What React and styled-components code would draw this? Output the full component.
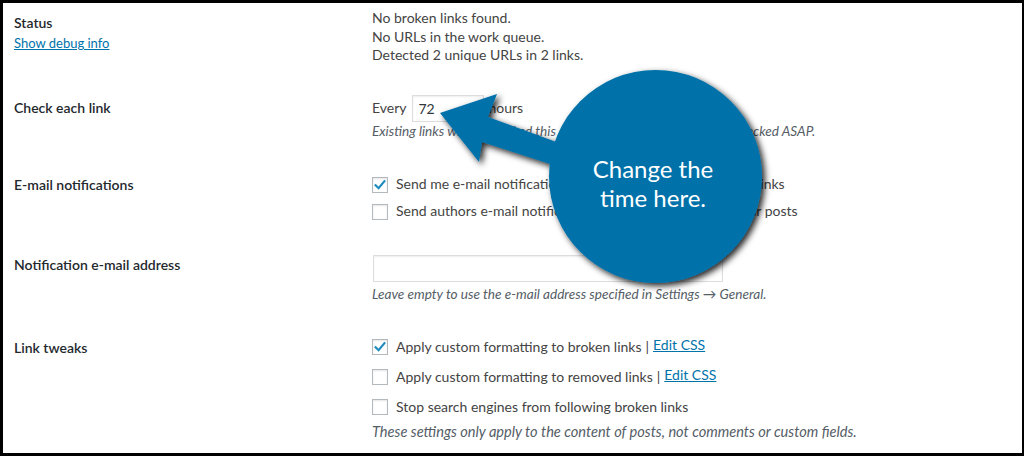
import React from "react";
import styled, { createGlobalStyle } from "styled-components";

const GlobalStyle = createGlobalStyle`
  html, body {
    margin: 0;
    padding: 0;
    background: #fff;
  }
  body {
    font-family: Lato, "Liberation Sans", sans-serif;
  }
`;

const Stage = styled.div`
  position: relative;
  width: 1024px;
  height: 456px;
  overflow: hidden;
`;

const Frame = styled.div`
  box-sizing: border-box;
  width: 100%;
  height: 100%;
  border-style: solid;
  border-color: #000;
  border-width: 3px 2px 3px 3px;
  background: #fff;
  display: flex;
  flex-direction: column;
`;

const Row = styled.div`
  display: grid;
  grid-template-columns: 358px 1fr;
  padding-left: 11px;
  height: ${(p) => (p.$h ? `${p.$h}px` : "auto")};
  flex: ${(p) => (p.$h ? "none" : "1")};
`;

const Label = styled.div`
  padding-top: ${(p) => p.$pt}px;
  font-size: 14px;
  font-weight: 600;
  line-height: 20px;
  color: #23282d;
`;

const DebugLink = styled.a`
  display: block;
  font-size: 13px;
  font-weight: 400;
  line-height: 20px;
  color: #0073aa;
  text-decoration: underline;
`;

const Value = styled.div`
  padding-top: ${(p) => p.$pt}px;
  font-size: 14px;
  line-height: 18.5px;
  color: #444;
`;

const Line = styled.div``;

const Inline = styled.div`
  display: flex;
  align-items: center;
  height: 27px;
`;

const NumberInput = styled.input`
  box-sizing: border-box;
  width: 72px;
  height: 27px;
  margin: 0 5px;
  padding: 0 6px;
  border: 1px solid #ddd;
  box-shadow: inset 0 1px 2px rgba(0, 0, 0, 0.07);
  font-family: inherit;
  font-size: 14px;
  color: #32373c;
  outline: none;
`;

const TextInput = styled.input`
  display: block;
  box-sizing: border-box;
  width: 350px;
  height: 27px;
  margin: 0 0 0 1px;
  border: 1px solid #ddd;
  box-shadow: inset 0 1px 2px rgba(0, 0, 0, 0.07);
  outline: none;
`;

const Desc = styled.p`
  margin: ${(p) => p.$mt || 0}px 0 0;
  font-size: ${(p) => p.$fs || 13.6}px;
  font-style: italic;
  line-height: 18px;
  color: #555d66;
`;

const CheckRow = styled.label`
  display: flex;
  align-items: center;
  gap: 8px;
  height: ${(p) => p.$h}px;
`;

const Box = styled.span`
  box-sizing: border-box;
  display: inline-flex;
  align-items: center;
  justify-content: center;
  width: 16px;
  height: 16px;
  border: 1px solid #b4b9be;
  background: #fff;
  box-shadow: inset 0 1px 2px rgba(0, 0, 0, 0.1);
`;

const Sep = styled.span`
  margin: 0 4px;
`;

const EditLink = styled.a`
  color: #0073aa;
  text-decoration: underline;
  position: relative;
  top: -2px;
`;

const Overlay = styled.div`
  position: absolute;
  inset: 0;
  pointer-events: none;
`;

const CalloutText = styled.div`
  position: absolute;
  left: 553px;
  top: 154px;
  width: 200px;
  text-align: center;
  font-family: Lato, "Open Sans", sans-serif;
  font-size: 24px;
  line-height: 29px;
  color: #fff;
`;

const Checkbox = ({ checked }) => (
  <Box>
    {checked && (
      <svg width="14" height="14" viewBox="0 0 14 14">
        <path
          d="M2.6 7.2 L5.6 10.2 L11.4 3.2"
          fill="none"
          stroke="#1e8cbe"
          strokeWidth="2.2"
          strokeLinecap="square"
        />
      </svg>
    )}
  </Box>
);

const Option = ({ h, checked, children }) => (
  <CheckRow $h={h}>
    <Checkbox checked={checked} />
    <span>{children}</span>
  </CheckRow>
);

export default function App() {
  return (
    <Stage>
      <GlobalStyle />
      <Frame>
        <Row $h={77}>
          <Label $pt={10}>
            Status
            <DebugLink href="#">Show debug info</DebugLink>
          </Label>
          <Value $pt={6}>
            <Line>No broken links found.</Line>
            <Line>No URLs in the work queue.</Line>
            <Line>Detected 2 unique URLs in 2 links.</Line>
          </Value>
        </Row>

        <Row $h={75}>
          <Label $pt={18}>Check each link</Label>
          <Value $pt={15}>
            <Inline>
              Every
              <NumberInput defaultValue="72" />
              hours
            </Inline>
            <Desc>
              Existing links will be checked this often. New links will usually be checked ASAP.
            </Desc>
          </Value>
        </Row>

        <Row $h={80}>
          <Label $pt={20}>E-mail notifications</Label>
          <Value $pt={16}>
            <Option h={27} checked>
              Send me e-mail notifications about newly detected broken links
            </Option>
            <Option h={27}>
              Send authors e-mail notifications about broken links in their posts
            </Option>
          </Value>
        </Row>

        <Row $h={85}>
          <Label $pt={20}>Notification e-mail address</Label>
          <Value $pt={20}>
            <TextInput />
            <Desc $mt={3}>
              Leave empty to use the e-mail address specified in Settings → General.
            </Desc>
          </Value>
        </Row>

        <Row>
          <Label $pt={18}>Link tweaks</Label>
          <Value $pt={12}>
            <Option h={30} checked>
              Apply custom formatting to broken links<Sep>|</Sep>
              <EditLink href="#">Edit CSS</EditLink>
            </Option>
            <Option h={30}>
              Apply custom formatting to removed links<Sep>|</Sep>
              <EditLink href="#">Edit CSS</EditLink>
            </Option>
            <Option h={30}>Stop search engines from following broken links</Option>
            <Desc $mt={1} $fs={14.6}>
              These settings only apply to the content of posts, not comments or custom fields.
            </Desc>
          </Value>
        </Row>
      </Frame>

      <Overlay>
        <svg width="1024" height="456" viewBox="0 0 1024 456">
          <defs>
            <filter id="callout-shadow" x="-20%" y="-20%" width="150%" height="150%">
              <feDropShadow dx="3" dy="3" stdDeviation="3" floodColor="#000" floodOpacity="0.85" />
            </filter>
          </defs>
          <g filter="url(#callout-shadow)" fill="#0271a9">
            <circle cx="655.5" cy="176.5" r="106.5" />
            <path d="M440 113 L497 94 L488 117 L600 158 L600 180 L482 142 L479 162 Z" />
          </g>
        </svg>
        <CalloutText>
          Change the
          <br />
          time here.
        </CalloutText>
      </Overlay>
    </Stage>
  );
}
